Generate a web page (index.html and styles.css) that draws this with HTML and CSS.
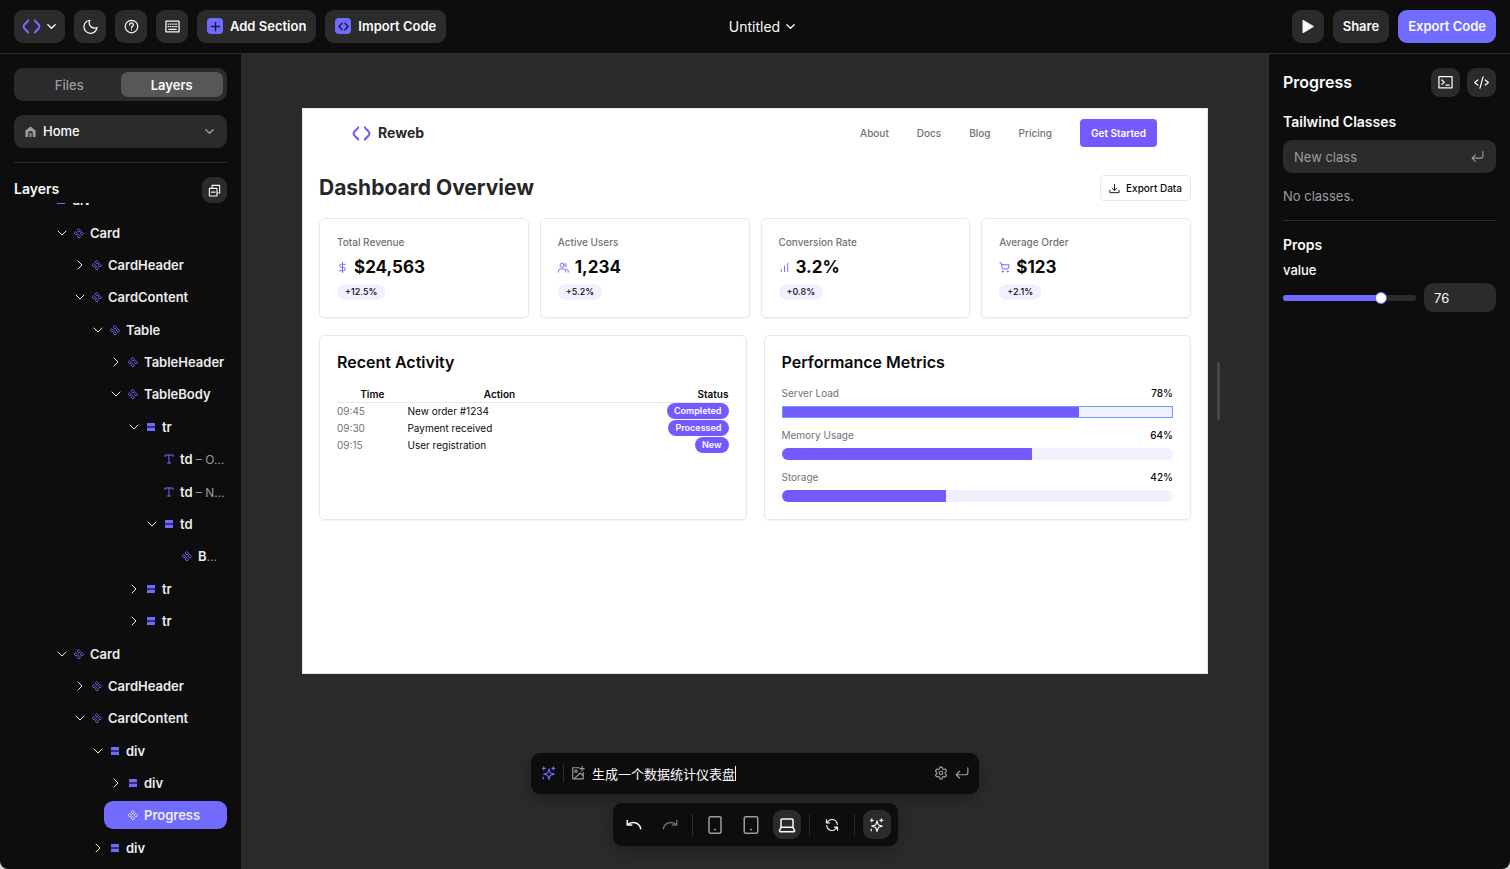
FILE: index.html
```
<!DOCTYPE html>
<html lang="en">
<head>
    <meta charset="UTF-8">
    <meta name="viewport" content="width=device-width, initial-scale=1.0">
    <title>Untitled - Reweb</title>
    <link rel="stylesheet" href="styles.css">
</head>
<body>
    <!-- icons -->
    <svg class="sprite" aria-hidden="true">
        <symbol id="logo" viewBox="0 0 20 16"><path d="M6.5 1.5C5.500 4 1.500 5 1.500 8s4 4 5 6.500M13.500 1.500C14.500 4 18.500 5 18.500 8s-4 4-5 6.500" stroke-width="2.200"/></symbol>
        <symbol id="down" viewBox="0 0 24 24"><path d="m4 8 8 8 8-8"/></symbol>
        <symbol id="right" viewBox="0 0 24 24"><path d="m8 4 8 8-8 8"/></symbol>
        <symbol id="moon" viewBox="0 0 24 24"><path d="M11 2a8.500 8.500 0 0 0 11.500 11.500A10.500 10.500 0 1 1 11 2z"/></symbol>
        <symbol id="help" viewBox="0 0 24 24"><circle cx="12" cy="12" r="10"/><path d="M9 9.500a3 3 0 1 1 4.500 2.300c-1 .6-1.500 1-1.500 2.200M12 17v.2"/></symbol>
        <symbol id="keyboard" viewBox="0 0 24 24"><path d="M1.500 3.500h21v17h-21zM5 8h1M8.500 8h1M12 8h1M15.500 8h1M18.500 8h.5M5 12h1M8.500 12h1M12 12h1M15.500 12h1M18.500 12h.5M6 16.500h12"/></symbol>
        <symbol id="plus" viewBox="0 0 24 24"><path d="M12 3v18M3 12h18"/></symbol>
        <symbol id="angles" viewBox="0 0 24 24"><path d="m9 5-7 7 7 7M15 5l7 7-7 7"/></symbol>
        <symbol id="play" viewBox="0 0 24 24"><path d="M5 2.500v19L21 12z" fill="currentColor"/></symbol>
        <symbol id="home" viewBox="0 0 24 24"><path d="M1 10 12 1l11 9v14h-6v-8a5 5 0 0 0-10 0v8H1zM10 15h4v9h-4z" fill="currentColor" stroke="none"/></symbol>
        <symbol id="collapse" viewBox="0 0 24 24"><path d="M2.500 8h14v14h-14zM6 15h7M7.500 8V2.500h14v14h-5"/></symbol>
        <symbol id="component" viewBox="-1 -2 26 26"><path d="m12 2 3.500 3.500L12 9 8.500 5.500zM12 15l3.500 3.500L12 22l-3.500-3.500zM5.500 8.500 9 12l-3.500 3.500L2 12zM18.500 8.500 22 12l-3.500 3.500L15 12z"/></symbol>
        <symbol id="box" viewBox="0 0 12 12"><path d="M2 2h8v8H2z" fill="#343275" stroke="none"/><rect x="2" y="2" width="8" height="3" rx=".5" fill="currentColor" stroke="none"/><rect x="2" y="7" width="8" height="3" rx=".5" fill="currentColor" stroke="none"/></symbol>
        <symbol id="type" viewBox="0 0 24 24"><path d="M4 7V4h16v3M9 20h6M12 4v16"/></symbol>
        <symbol id="terminal" viewBox="0 0 24 24"><path d="M1.500 2.500h21v18h-21zM6 8l4 3.500L6 15M12.500 16H18"/></symbol>
        <symbol id="code" viewBox="0 0 24 24"><path d="m18 16 5-4-5-4M6 8l-5 4 5 4M14.500 3l-5 18"/></symbol>
        <symbol id="enter" viewBox="0 0 24 24"><path d="m8 9-6 6 6 6M22 3v8a4 4 0 0 1-4 4H2"/></symbol>
        <symbol id="dollar" viewBox="0 0 24 24"><path d="M12 1v22M18 5H9.500a3.500 3.500 0 0 0 0 7h5a3.500 3.500 0 0 1 0 7H5"/></symbol>
        <symbol id="users" viewBox="0 0 24 24"><path d="M1 22v-2a5 5 0 0 1 5-5h6a5 5 0 0 1 5 5v2M22.500 22v-2a5 5 0 0 0-3.500-4.500M16 3a5 5 0 0 1 0 8"/><circle cx="9" cy="7" r="4.500"/></symbol>
        <symbol id="chart" viewBox="0 0 24 24"><path d="M19 21V3M12 21V9M5 21v-5"/></symbol>
        <symbol id="cart" viewBox="0 0 24 24"><circle cx="8" cy="21" r="1.200"/><circle cx="19" cy="21" r="1.200"/><path d="M2 2h3l2.600 13h12.200L22 6H6"/></symbol>
        <symbol id="download" viewBox="0 0 24 24"><path d="M2 16v5h20v-5M7 11l5 5 5-5M12 16V3"/></symbol>
        <symbol id="sparkles" viewBox="0 0 24 24"><path d="m13 5-1.800 5.500a3 3 0 0 1-2 2L4 14l5.200 1.500a3 3 0 0 1 2 2L13 23l1.800-5.500a3 3 0 0 1 2-2L22 14l-5.200-1.500a3 3 0 0 1-2-2zM4 1.500v5M1.500 4h5M3 19v3M20.500 1.500v5M18 4h5" transform="translate(-1)"/></symbol>
        <symbol id="image" viewBox="0 0 24 24"><path d="M14 3H3v19h18V11M19 1v7M15.500 4.500h7M5 22 16 12l5 5"/><circle cx="8.500" cy="9" r="2"/></symbol>
        <symbol id="gear" viewBox="0 0 24 24"><path d="M10 2h4l.7 3 2 1.200L19.500 5l2 3.600-2.300 2.200v2.400l2.300 2.200-2 3.600-2.800-1.200-2 1.200L14 22h-4l-.7-3-2-1.200L4.500 19l-2-3.600 2.300-2.200v-2.400L2.500 8.600l2-3.600 2.800 1.200 2-1.200z"/><circle cx="12" cy="12" r="3"/></symbol>
        <symbol id="undo" viewBox="0 0 24 24"><path d="M3 6v6h6M3 12c5-5 16-5 18 5"/></symbol>
        <symbol id="redo" viewBox="0 0 24 24"><path d="M21 6v6h-6M21 12C16 7 5 7 3 17"/></symbol>
        <symbol id="mobile" viewBox="0 0 24 24"><rect x="4" y="1" width="16" height="22" rx="2"/><path d="M11.500 18h1"/></symbol>
        <symbol id="tablet" viewBox="0 0 24 24"><rect x="3" y="1" width="18" height="22" rx="2"/><path d="M11.500 18h1"/></symbol>
        <symbol id="laptop" viewBox="0 0 24 24"><path d="M4 15V5.500a1.500 1.500 0 0 1 1.500-1.500h13A1.500 1.500 0 0 1 20 5.500V15M4 15h16l2 4.500a1 1 0 0 1-1 1.500H3a1 1 0 0 1-1-1.500z"/></symbol>
        <symbol id="refresh" viewBox="0 0 24 24"><path d="M21 11A9 9 0 0 0 5 6L2.500 8.500M2.500 3v5.500H8M3 13a9 9 0 0 0 16 5l2.500-2.500M21.500 21v-5.500H16"/></symbol>
    </svg>

    <header class="topbar">
        <div class="topbar__group">
            <button class="btn btn--menu" aria-label="Menu"><svg class="logo"><use href="#logo"/></svg><svg class="icon icon--sm"><use href="#down"/></svg></button>
            <button class="btn btn--icon" aria-label="Theme"><svg class="icon"><use href="#moon"/></svg></button>
            <button class="btn btn--icon" aria-label="Help"><svg class="icon"><use href="#help"/></svg></button>
            <button class="btn btn--icon" aria-label="Shortcuts"><svg class="icon"><use href="#keyboard"/></svg></button>
            <button class="btn"><span class="chip"><svg class="icon icon--sm"><use href="#plus"/></svg></span>Add Section</button>
            <button class="btn"><span class="chip"><svg class="icon icon--sm"><use href="#angles"/></svg></span>Import Code</button>
        </div>
        <button class="project">Untitled<svg class="icon icon--sm"><use href="#down"/></svg></button>
        <div class="topbar__group topbar__group--end">
            <button class="btn btn--icon" aria-label="Preview"><svg class="icon"><use href="#play"/></svg></button>
            <button class="btn">Share</button>
            <button class="btn btn--primary">Export Code</button>
        </div>
    </header>

    <div class="editor">
        <aside class="sidebar">
            <div class="tabs">
                <button class="tab">Files</button>
                <button class="tab tab--active">Layers</button>
            </div>
            <div class="page-select">
                <svg class="icon icon--sm"><use href="#home"/></svg>
                <select aria-label="Page"><option>Home</option></select>
                <svg class="icon icon--sm"><use href="#down"/></svg>
            </div>
            <div class="layers-head">
                <h2>Layers</h2>
                <button class="btn btn--collapse" aria-label="Collapse all"><svg class="icon"><use href="#collapse"/></svg></button>
            </div>
            <div class="tree-scroll">
                <ul class="tree">
                    <li class="node d0"><svg><use href="#down"/></svg><svg class="node__type"><use href="#box"/></svg>div</li>
                    <li class="node d1"><svg><use href="#down"/></svg><svg class="node__type"><use href="#component"/></svg>Card</li>
                    <li class="node d2"><svg><use href="#right"/></svg><svg class="node__type"><use href="#component"/></svg>CardHeader</li>
                    <li class="node d2"><svg><use href="#down"/></svg><svg class="node__type"><use href="#component"/></svg>CardContent</li>
                    <li class="node d3"><svg><use href="#down"/></svg><svg class="node__type"><use href="#component"/></svg>Table</li>
                    <li class="node d4"><svg><use href="#right"/></svg><svg class="node__type"><use href="#component"/></svg>TableHeader</li>
                    <li class="node d4"><svg><use href="#down"/></svg><svg class="node__type"><use href="#component"/></svg>TableBody</li>
                    <li class="node d5"><svg><use href="#down"/></svg><svg class="node__type"><use href="#box"/></svg>tr</li>
                    <li class="node node--leaf d6"><svg class="node__type"><use href="#type"/></svg><span>td <small>– O…</small></span></li>
                    <li class="node node--leaf d6"><svg class="node__type"><use href="#type"/></svg><span>td <small>– N…</small></span></li>
                    <li class="node d6"><svg><use href="#down"/></svg><svg class="node__type"><use href="#box"/></svg>td</li>
                    <li class="node node--leaf d7"><svg class="node__type"><use href="#component"/></svg><span>B<small>…</small></span></li>
                    <li class="node d5"><svg><use href="#right"/></svg><svg class="node__type"><use href="#box"/></svg>tr</li>
                    <li class="node d5"><svg><use href="#right"/></svg><svg class="node__type"><use href="#box"/></svg>tr</li>
                    <li class="node d1"><svg><use href="#down"/></svg><svg class="node__type"><use href="#component"/></svg>Card</li>
                    <li class="node d2"><svg><use href="#right"/></svg><svg class="node__type"><use href="#component"/></svg>CardHeader</li>
                    <li class="node d2"><svg><use href="#down"/></svg><svg class="node__type"><use href="#component"/></svg>CardContent</li>
                    <li class="node d3"><svg><use href="#down"/></svg><svg class="node__type"><use href="#box"/></svg>div</li>
                    <li class="node d4"><svg><use href="#right"/></svg><svg class="node__type"><use href="#box"/></svg>div</li>
                    <li class="node node--leaf node--active d4"><svg class="node__type"><use href="#component"/></svg>Progress</li>
                    <li class="node d3"><svg><use href="#right"/></svg><svg class="node__type"><use href="#box"/></svg>div</li>
                </ul>
            </div>
        </aside>

        <main class="canvas">
            <div class="preview">
                <header class="site-header">
                    <a class="brand" href="#"><svg class="logo"><use href="#logo"/></svg>Reweb</a>
                    <nav class="site-nav">
                        <a href="#">About</a>
                        <a href="#">Docs</a>
                        <a href="#">Blog</a>
                        <a href="#">Pricing</a>
                        <button class="cta">Get Started</button>
                    </nav>
                </header>
                <section class="dashboard">
                    <div class="dashboard__head">
                        <h1>Dashboard Overview</h1>
                        <button class="export"><svg class="icon icon--xs"><use href="#download"/></svg>Export Data</button>
                    </div>
                    <div class="stats">
                        <article class="card">
                            <h3>Total Revenue</h3>
                            <p class="stat"><svg class="icon icon--xs"><use href="#dollar"/></svg>$24,563</p>
                            <span class="badge">+12.5%</span>
                        </article>
                        <article class="card">
                            <h3>Active Users</h3>
                            <p class="stat"><svg class="icon icon--xs"><use href="#users"/></svg>1,234</p>
                            <span class="badge">+5.2%</span>
                        </article>
                        <article class="card">
                            <h3>Conversion Rate</h3>
                            <p class="stat"><svg class="icon icon--xs"><use href="#chart"/></svg>3.2%</p>
                            <span class="badge">+0.8%</span>
                        </article>
                        <article class="card">
                            <h3>Average Order</h3>
                            <p class="stat"><svg class="icon icon--xs"><use href="#cart"/></svg>$123</p>
                            <span class="badge">+2.1%</span>
                        </article>
                    </div>
                    <div class="panels">
                        <article class="card">
                            <h2>Recent Activity</h2>
                            <table class="activity">
                                <thead>
                                    <tr><th>Time</th><th>Action</th><th>Status</th></tr>
                                </thead>
                                <tbody>
                                    <tr><td>09:45</td><td>New order #1234</td><td><span class="badge badge--solid">Completed</span></td></tr>
                                    <tr><td>09:30</td><td>Payment received</td><td><span class="badge badge--solid">Processed</span></td></tr>
                                    <tr><td>09:15</td><td>User registration</td><td><span class="badge badge--solid">New</span></td></tr>
                                </tbody>
                            </table>
                        </article>
                        <article class="card">
                            <h2>Performance Metrics</h2>
                            <div class="metric">
                                <p class="metric__label"><span>Server Load</span><b>78%</b></p>
                                <div class="bar bar--selected"><div class="bar__fill" style="width: 76%"></div></div>
                            </div>
                            <div class="metric">
                                <p class="metric__label"><span>Memory Usage</span><b>64%</b></p>
                                <div class="bar"><div class="bar__fill" style="width: 64%"></div></div>
                            </div>
                            <div class="metric">
                                <p class="metric__label"><span>Storage</span><b>42%</b></p>
                                <div class="bar"><div class="bar__fill" style="width: 42%"></div></div>
                            </div>
                        </article>
                    </div>
                </section>
                <div class="resize-handle"></div>
            </div>

            <form class="prompt">
                <svg class="icon prompt__ai"><use href="#sparkles"/></svg>
                <span class="sep"></span>
                <svg class="icon"><use href="#image"/></svg>
                <div class="prompt__text">
                    <input type="text" aria-label="Prompt" value="生成一个数据统计仪表盘">
                    <span class="caret"></span>
                </div>
                <svg class="icon"><use href="#gear"/></svg>
                <svg class="icon"><use href="#enter"/></svg>
            </form>
            <div class="toolbar">
                <button class="tool tool--bright" aria-label="Undo"><svg><use href="#undo"/></svg></button>
                <button class="tool tool--dim" aria-label="Redo"><svg><use href="#redo"/></svg></button>
                <span class="sep"></span>
                <button class="tool" aria-label="Mobile"><svg><use href="#mobile"/></svg></button>
                <button class="tool" aria-label="Tablet"><svg><use href="#tablet"/></svg></button>
                <button class="tool tool--active" aria-label="Laptop"><svg><use href="#laptop"/></svg></button>
                <span class="sep"></span>
                <button class="tool tool--bright tool--small" aria-label="Refresh"><svg><use href="#refresh"/></svg></button>
                <span class="sep"></span>
                <button class="tool tool--active tool--small" aria-label="AI"><svg><use href="#sparkles"/></svg></button>
            </div>
        </main>

        <aside class="inspector">
            <div class="inspector__head">
                <h2>Progress</h2>
                <button class="btn btn--square" aria-label="Console"><svg class="icon"><use href="#terminal"/></svg></button>
                <button class="btn btn--square" aria-label="Code"><svg class="icon"><use href="#code"/></svg></button>
            </div>
            <label class="inspector__title" for="new-class">Tailwind Classes</label>
            <div class="field">
                <input id="new-class" type="text" placeholder="New class">
                <svg class="icon"><use href="#enter"/></svg>
            </div>
            <p class="empty">No classes.</p>
            <h3 class="inspector__title inspector__title--props">Props</h3>
            <label class="prop" for="value">value</label>
            <div class="prop-row">
                <input id="value" class="slider" type="range" min="0" max="100" value="76" style="--value: 76%">
                <input class="number" type="text" aria-label="value number" value="76">
            </div>
        </aside>
    </div>
</body>
</html>
```
FILE: styles.css
```
*,
*:before,
*:after{
    box-sizing: border-box;
}

html{
    height: 100%;
    background: #d4d4d4;
}

body{
    margin: 0;
    height: 100vh;
    display: flex;
    flex-direction: column;
    font-family: Inter, "Noto Sans CJK SC", sans-serif;
    font-size: 13px;
    color: #fafafa;
}

h1, h2, h3, p, ul{
    margin: 0;
    padding: 0;
}

button, input, select{
    font: inherit;
    color: inherit;
    border: none;
    outline: none;
    padding: 0;
    background: transparent;
}

a{
    color: inherit;
    text-decoration: none;
}

svg{
    fill: none;
    stroke: currentColor;
    stroke-width: 2;
    stroke-linecap: round;
    stroke-linejoin: round;
    flex-shrink: 0;
}

.sprite{
    display: none;
}

.icon{
    width: 15px;
    height: 15px;
}

.icon--sm{
    width: 11px;
    height: 11px;
    stroke-width: 3;
}

.icon--xs{
    width: 11px;
    height: 11px;
}

.logo{
    width: 19px;
    height: 15px;
    color: #726bff;
}

/* Top bar */
.topbar{
    display: grid;
    grid-template-columns: 1fr auto 1fr;
    align-items: center;
    padding: 10px 14px;
    background: #0d0d0d;
    border-bottom: 1px solid #2b2b2b;
}

.topbar__group{
    display: flex;
    gap: 9px;
}

.topbar__group--end{
    justify-content: flex-end;
}

.btn{
    display: flex;
    align-items: center;
    justify-content: center;
    gap: 7px;
    height: 33px;
    padding: 0 10px 1px;
    border-radius: 9px;
    background: #2b2b2b;
    font-weight: 600;
    white-space: nowrap;
}

.btn--icon{
    width: 32px;
    padding: 0;
}

.btn--menu{
    gap: 5px;
    padding: 0 8px;
}

.btn--primary{
    background: #726bff;
}

.btn--square{
    width: 29px;
    height: 29px;
    padding: 0;
}

.btn--collapse{
    width: 25px;
    height: 26px;
    padding: 0;
}

.btn--collapse .icon{
    width: 13px;
    height: 13px;
}

.chip{
    display: flex;
    align-items: center;
    justify-content: center;
    width: 16px;
    height: 16px;
    border-radius: 4px;
    background: #726bff;
    color: #1b1940;
}

.project{
    display: flex;
    align-items: center;
    gap: 5px;
    padding: 0 0 1px 15px;
    font-size: 14px;
}

/* Editor */
.editor{
    flex: 1;
    min-height: 0;
    display: flex;
    overflow: hidden;
    border-radius: 0 0 8px 8px;
}

.sidebar{
    width: 242px;
    flex-shrink: 0;
    display: flex;
    flex-direction: column;
    padding: 14px 14px 0;
    background: #0d0d0d;
    border-right: 1px solid #2b2b2b;
}

.tabs{
    display: flex;
    padding: 4px;
    border-radius: 9px;
    background: #2b2b2b;
}

.tab{
    flex: 1;
    height: 25px;
    border-radius: 7px;
    color: #9d9ba1;
    font-weight: 500;
}

.tab--active{
    background: #575757;
    color: #fafafa;
    font-weight: 600;
}

.page-select{
    display: flex;
    align-items: center;
    gap: 7px;
    height: 33px;
    margin-top: 14px;
    padding: 0 12px 1px 11px;
    border-radius: 9px;
    background: #2b2b2b;
    color: #9d9ba1;
}

.page-select select{
    flex: 1;
    appearance: none;
    color: #fafafa;
    font-weight: 500;
}

.layers-head{
    display: flex;
    align-items: center;
    justify-content: space-between;
    margin-top: 14px;
    padding-top: 14px;
    border-top: 1px solid #2b2b2b;
}

.layers-head h2{
    padding-bottom: 3px;
    font-size: 14px;
    font-weight: 600;
}

.tree-scroll{
    flex: 1;
    min-height: 0;
    overflow: hidden;
    display: flex;
}

/* list is scrolled half a row under the heading */
.tree{
    flex: 1;
    min-width: 0;
    display: grid;
    grid-template-columns: minmax(0, 1fr);
    grid-auto-rows: 1fr;
    align-items: center;
    margin-top: -19px;
    padding-bottom: 5px;
    list-style: none;
}

.node{
    display: flex;
    align-items: center;
    gap: 5px;
    height: 28px;
    padding-left: 6px;
    border-radius: 9px;
    color: #ececec;
    font-weight: 600;
    white-space: nowrap;
}

.node svg{
    width: 12px;
    height: 12px;
}

.node .node__type{
    color: #726bff;
}

.node small{
    font-size: 12px;
    font-weight: 400;
    color: #9d9ba1;
}

.node--leaf{
    padding-left: 23px;
}

.node--active{
    background: #726bff;
}

.node--active .node__type{
    color: #ececec;
}

.d0{ margin-left: 18px; }
.d1{ margin-left: 36px; }
.d2{ margin-left: 54px; }
.d3{ margin-left: 72px; }
.d4{ margin-left: 90px; }
.d5{ margin-left: 108px; }
.d6{ margin-left: 126px; }
.d7{ margin-left: 144px; }

/* Canvas */
.canvas{
    flex: 1;
    min-width: 0;
    display: flex;
    flex-direction: column;
    align-items: center;
    padding: 54px 60px 23px;
    background: #2b2b2b;
}

.preview{
    position: relative;
    width: 100%;
    aspect-ratio: 8 / 5;
    border: 1px solid #e4e4e7;
    background: #fff;
    color: #0a0a0a;
    font-size: 10px;
    line-height: 14px;
}

.resize-handle{
    position: absolute;
    top: 50%;
    right: -13px;
    width: 3px;
    height: 58px;
    margin-top: -29px;
    border-radius: 2px;
    background: #48484c;
}

.site-header{
    display: flex;
    align-items: center;
    justify-content: space-between;
    padding: 10px 50px 10px 49px;
}

.brand{
    display: flex;
    align-items: center;
    gap: 7px;
    color: #27272a;
    font-size: 14px;
    font-weight: 700;
}

.brand .logo, .stat svg{
    color: #7559ff;
}

.site-nav{
    display: flex;
    align-items: center;
    gap: 28px;
    color: #71717a;
    font-weight: 500;
}

.cta{
    height: 28px;
    padding: 0 11px;
    border-radius: 4px;
    background: #7559ff;
    color: #fff;
    font-weight: 600;
}

.dashboard{
    display: flex;
    flex-direction: column;
    gap: 17px;
    padding: 18px 16px 16px;
}

.dashboard__head{
    display: flex;
    align-items: center;
    justify-content: space-between;
}

.dashboard__head h1{
    color: #27272a;
    font-size: 21px;
    font-weight: 700;
    line-height: 26px;
}

.export{
    display: flex;
    align-items: center;
    gap: 6px;
    height: 26px;
    padding: 0 8px;
    border: 1px solid #e9e9eb;
    border-radius: 4px;
    font-weight: 500;
}

.stats{
    display: grid;
    grid-template-columns: repeat(4, 1fr);
    gap: 11px;
}

.panels{
    display: grid;
    grid-template-columns: repeat(2, 1fr);
    gap: 17px;
}

.card{
    padding: 16px 17px 17px;
    border: 1px solid #e9e9eb;
    border-radius: 5px;
    box-shadow: 0 1px 2px rgba(0, 0, 0, .06);
}

.card h3{
    color: #71717a;
    font-size: 10px;
    font-weight: 500;
}

.card h2{
    font-size: 16px;
    font-weight: 600;
    line-height: 20px;
    margin-bottom: 14px;
}

.stat{
    display: flex;
    align-items: center;
    gap: 6px;
    margin: 6px 0 4px;
    font-size: 17px;
    font-weight: 700;
    line-height: 25px;
}

.badge{
    display: block;
    width: fit-content;
    padding: 0 8px;
    border-radius: 8px;
    background: #f2f0ff;
    font-size: 9px;
    font-weight: 500;
    line-height: 16px;
}

.badge--solid{
    margin-left: auto;
    padding: 0 7px;
    background: #7559ff;
    color: #fff;
    font-weight: 600;
}

.activity{
    width: 100%;
    border-collapse: collapse;
}

.activity th, .activity td{
    height: 17px;
    padding: 0;
}

.activity th{
    height: 16px;
    font-weight: 600;
    border-bottom: 1px solid #e9e9eb;
}

.activity th:first-child{
    width: 18%;
}

.activity th:nth-child(2){
    width: 47%;
}

.activity th:last-child{
    text-align: right;
}

.activity td:first-child{
    color: #71717a;
}

.metric + .metric{
    margin-top: 10px;
}

.metric__label{
    display: flex;
    justify-content: space-between;
    margin-bottom: 6px;
    color: #71717a;
}

.metric__label b{
    color: #0a0a0a;
    font-weight: 500;
}

.bar{
    height: 12px;
    overflow: hidden;
    border-radius: 6px;
    background: #f2f0ff;
}

.bar--selected{
    outline: 1px solid #60a5fa;
    outline-offset: -1px;
    border-radius: 0;
}

.bar__fill{
    height: 100%;
    background: #7559ff;
}

/* Floating bars */
.prompt, .toolbar{
    display: flex;
    align-items: center;
    border-radius: 9px;
    background: #0d0d0d;
    box-shadow: 0 6px 16px rgba(0, 0, 0, .25);
}

.prompt{
    width: 448px;
    height: 41px;
    gap: 7px;
    margin-top: auto;
    padding: 0 10px 1px 11px;
    color: #9d9ba1;
}

.prompt .icon{
    width: 14px;
    height: 14px;
}

.prompt .prompt__ai{
    color: #726bff;
}

.prompt__text{
    flex: 1;
    display: flex;
    align-items: center;
    color: #fff;
}

.prompt__text input{
    field-sizing: content;
}

.caret{
    width: 1px;
    height: 15px;
    background: #fff;
}

.sep{
    width: 1px;
    height: 18px;
    background: #2b2b2b;
}

.toolbar{
    height: 43px;
    gap: 8px;
    margin-top: 9px;
    padding: 0 7px;
}

.toolbar .sep{
    height: 22px;
}

.tool{
    display: flex;
    align-items: center;
    justify-content: center;
    width: 28px;
    height: 29px;
    border-radius: 9px;
    color: #9d9ba1;
}

.tool svg{
    width: 18px;
    height: 18px;
}

.tool--small svg{
    width: 14px;
    height: 14px;
}

.tool--bright{
    color: #fafafa;
}

.tool--dim{
    color: #6b6b6f;
}

.tool--active{
    background: #2b2b2b;
    color: #fafafa;
}

/* Inspector */
.inspector{
    width: 242px;
    flex-shrink: 0;
    display: flex;
    flex-direction: column;
    padding: 14px;
    background: #0d0d0d;
    border-left: 1px solid #2b2b2b;
}

.inspector__head{
    display: flex;
    align-items: center;
    gap: 7px;
}

.inspector__head h2{
    flex: 1;
    padding-bottom: 1px;
    font-size: 16px;
    font-weight: 600;
}

.inspector__title{
    margin-top: 15px;
    font-size: 14px;
    font-weight: 600;
    line-height: 20px;
}

.field{
    display: flex;
    align-items: center;
    height: 33px;
    margin-top: 8px;
    padding: 0 12px 0 11px;
    border-radius: 9px;
    background: #2b2b2b;
    color: #9d9ba1;
}

.field .icon{
    width: 13px;
    height: 13px;
}

.field input{
    flex: 1;
    min-width: 0;
}

.field input::placeholder{
    color: #9d9ba1;
}

.empty{
    padding: 14px 0 15px;
    border-bottom: 1px solid #2b2b2b;
    color: #9d9ba1;
    line-height: 18px;
}

.inspector__title--props{
    margin-top: 14px;
}

.prop{
    margin-top: 6px;
    font-weight: 500;
    line-height: 18px;
}

.prop-row{
    display: flex;
    align-items: center;
    gap: 8px;
    margin-top: 4px;
}

.slider{
    flex: 1;
    min-width: 0;
    height: 12px;
    margin: 0;
    appearance: none;
}

.slider::-webkit-slider-runnable-track{
    height: 6px;
    border-radius: 3px;
    background: linear-gradient(to right, #726bff var(--value), #2b2b2b var(--value));
}

.slider::-webkit-slider-thumb{
    appearance: none;
    width: 12px;
    height: 12px;
    margin-top: -3px;
    border: 1px solid #726bff;
    border-radius: 50%;
    background: #fff;
}

.number{
    width: 72px;
    height: 29px;
    padding: 0 10px;
    border-radius: 9px;
    background: #2b2b2b;
}
```
